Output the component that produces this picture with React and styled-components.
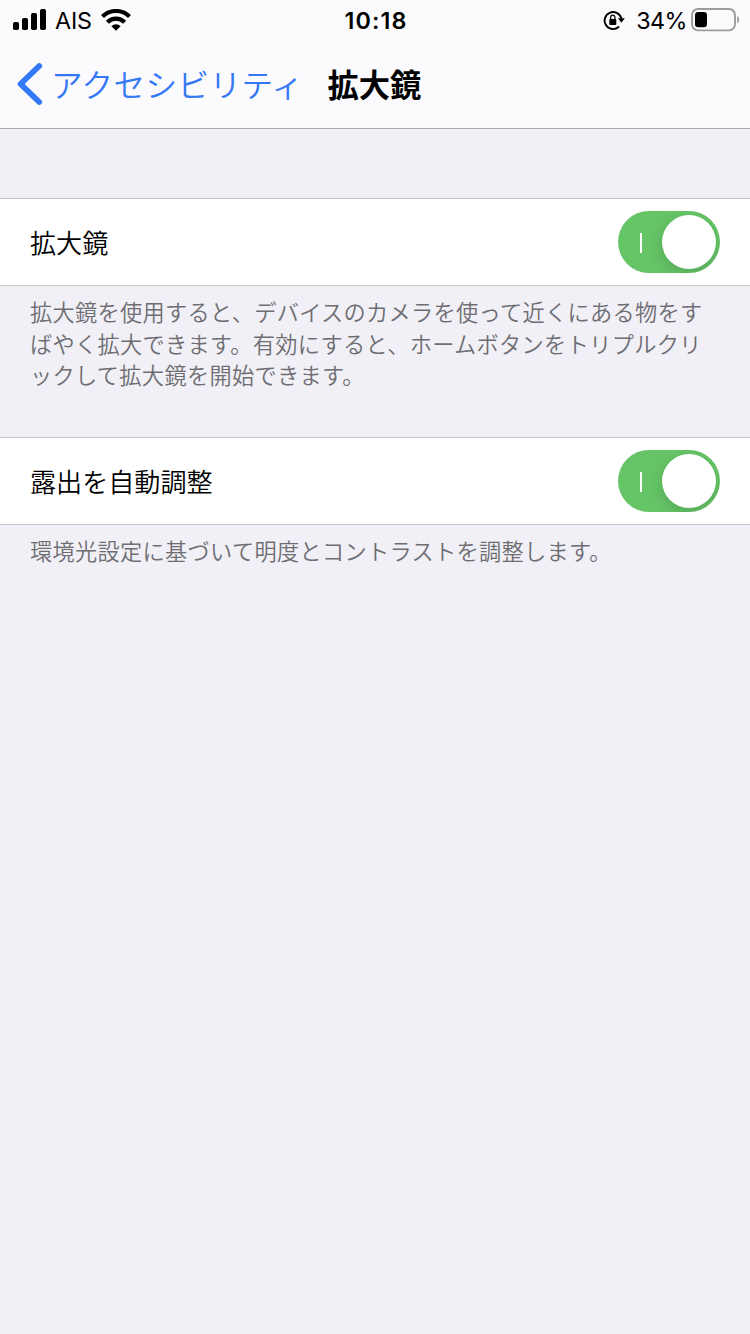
import React, { useState } from "react"
import styled, { createGlobalStyle } from "styled-components"

const GlobalStyle = createGlobalStyle`
  * {
    box-sizing: border-box;
  }

  body {
    margin: 0;
    background: #f1f0f6;
    font-family: "Noto Sans CJK JP", sans-serif;
    color: #000;
  }
`

const SignalIcon = () => (
  <svg width="34" height="22" viewBox="0 0 34 22">
    <rect x="0" y="13" width="6" height="8" rx="1.8" />
    <rect x="9" y="9" width="6" height="12" rx="1.8" />
    <rect x="18" y="4" width="6" height="17" rx="1.8" />
    <rect x="27" y="0" width="6" height="21" rx="1.8" />
  </svg>
)

const WifiIcon = () => (
  <svg width="30" height="22" viewBox="0 0 30 22">
    <g fill="none" stroke="#000" strokeWidth="4.2">
      <path d="M1.5 7.5a19.3 19.3 0 0 1 27 0" />
      <path d="M6.4 13.2a12 12 0 0 1 17.2 0" />
    </g>
    <path d="M15 21.8L10.4 17.2a6.6 6.6 0 0 1 9.2 0z" />
  </svg>
)

const RotationLockIcon = () => (
  <svg width="22" height="22" viewBox="0 0 22 22">
    <path
      d="M15.6 18.1A8.5 8.5 0 1 1 18.3 9.3"
      fill="none"
      stroke="#000"
      strokeWidth="1.9"
      strokeLinecap="round"
    />
    <path d="M15 9.2h6.8l-3.4 4.6z" />
    <rect x="6.3" y="10" width="7" height="5.9" rx="0.9" />
    <path
      d="M7.7 10.4V8.3a2.1 2.1 0 0 1 4.2 0v2.1"
      fill="none"
      stroke="#000"
      strokeWidth="1.3"
    />
  </svg>
)

const BatteryIcon = () => (
  <svg width="49" height="24" viewBox="0 0 49 24">
    <rect
      x="1"
      y="1"
      width="43"
      height="21.4"
      rx="6"
      fill="none"
      stroke="#9b9b9d"
      strokeWidth="1.9"
    />
    <rect x="4" y="4" width="12" height="15.2" rx="3.2" />
    <path d="M46.2 8c2.6 1.6 2.6 5.8 0 7.4z" fill="#9b9b9d" />
  </svg>
)

const BackIcon = () => (
  <svg width="28" height="44" viewBox="0 0 28 44">
    <path
      d="M24.2 4L5.6 22l18.6 18"
      fill="none"
      stroke="#3478f6"
      strokeWidth="5.8"
      strokeLinecap="round"
      strokeLinejoin="round"
    />
  </svg>
)

const Setting = ({ label, children }) => {
  const [on, setOn] = useState(true)

  return (
    <Section>
      <Cell>
        <Label>{label}</Label>
        <Toggle
          role="switch"
          aria-checked={on}
          aria-label={label}
          $on={on}
          onClick={() => setOn(!on)}
        >
          <Mark />
          <Knob />
        </Toggle>
      </Cell>
      <Caption>{children}</Caption>
    </Section>
  )
}

const App = () => (
  <Screen>
    <GlobalStyle />
    <Header>
      <StatusBar>
        <StatusLeft>
          <SignalIcon />
          <Carrier>AIS</Carrier>
          <WifiIcon />
        </StatusLeft>
        <Time>10:18</Time>
        <StatusRight>
          <RotationLockIcon />
          <Percent>34%</Percent>
          <BatteryIcon />
        </StatusRight>
      </StatusBar>
      <Nav>
        <BackButton>
          <BackIcon />
          <BackText>アクセシビリティ</BackText>
        </BackButton>
        <Title>拡大鏡</Title>
      </Nav>
    </Header>
    <Main>
      <Setting label="拡大鏡">
        拡大鏡を使用すると、デバイスのカメラを使って近くにある物をす
        <br />
        ばやく拡大できます。有効にすると、ホームボタンをトリプルクリ
        <br />
        ックして拡大鏡を開始できます。
      </Setting>
      <Setting label="露出を自動調整">
        環境光設定に基づいて明度とコントラストを調整します。
      </Setting>
    </Main>
  </Screen>
)

const Screen = styled.div`
  width: 750px;
  min-height: 1334px;
  background: #f1f0f6;
`

const Header = styled.header`
  height: 129px;
  background: #fbfbfd;
  border-bottom: 1px solid #a9a9ad;
`

const StatusBar = styled.div`
  display: grid;
  grid-template-columns: 1fr auto 1fr;
  align-items: center;
  height: 40px;
  padding: 0 10px 0 13px;
  font-family: Inter, sans-serif;
  font-size: 23.3px;
  line-height: 38px;
`

const StatusLeft = styled.div`
  display: flex;
  align-items: center;
`

const StatusRight = styled.div`
  display: flex;
  align-items: center;
  justify-content: flex-end;
`

const Carrier = styled.span`
  margin: 2px 9px 0 8px;
  letter-spacing: -0.15px;
`

const Time = styled.span`
  margin: 2px 1px 0 0;
  font-weight: 600;
  letter-spacing: 1.1px;
`

const Percent = styled.span`
  margin: 2px 4px 0 11px;
  letter-spacing: -0.5px;
`

const Nav = styled.nav`
  display: flex;
  align-items: center;
  height: 88px;
  padding-left: 15px;
`

const BackButton = styled.button`
  display: flex;
  align-items: center;
  height: 88px;
  padding: 0;
  border: 0;
  background: none;
  color: #3478f6;
  font-family: inherit;
`

const BackText = styled.span`
  margin: -3px 0 0 8px;
  font-size: 31.6px;
  font-weight: 350;
  letter-spacing: 0.4px;
  line-height: 44px;
`

const Title = styled.h1`
  margin: 0 0 0 24px;
  font-size: 31.3px;
  font-weight: 700;
  line-height: 44px;
`

const Main = styled.main`
  padding-top: 69px;
`

const Section = styled.section`
  margin-bottom: 46px;
`

const Cell = styled.div`
  display: flex;
  align-items: center;
  justify-content: space-between;
  height: 88px;
  padding: 0 30px;
  background: #fff;
  border-top: 1px solid #c6c6c9;
  border-bottom: 1px solid #c6c6c9;
`

const Label = styled.span`
  font-size: 26.1px;
  font-weight: 350;
  line-height: 40px;
`

const Toggle = styled.button`
  display: flex;
  align-items: center;
  justify-content: space-between;
  width: 102px;
  height: 62px;
  padding: 0 4px 0 22px;
  border: 0;
  border-radius: 31px;
  background: ${props => (props.$on ? "#65c466" : "#e9e9ea")};
  overflow: hidden;
`

const Mark = styled.span`
  width: 2px;
  height: 20px;
  margin-top: 2px;
  background: #fff;
`

const Knob = styled.span`
  width: 54px;
  height: 54px;
  border-radius: 50%;
  background: #fff;
  box-shadow: 0 5px 14px rgba(0, 0, 0, 0.14);
`

const Caption = styled.p`
  margin: 0;
  padding: 10px 0 0 30px;
  color: #6d6d72;
  font-size: 22.2px;
  font-weight: 350;
  letter-spacing: 0.32px;
  line-height: 31.6px;
  white-space: nowrap;
`

export default App
